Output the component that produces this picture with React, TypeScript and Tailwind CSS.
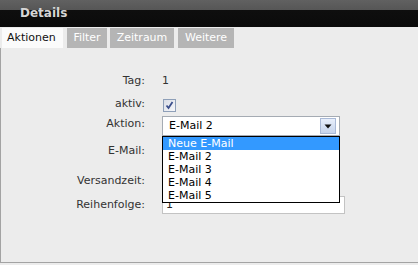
import React from "react";

function Checkbox() {
  return (
    <div className="ml-[1px] w-[13px] h-[13px] border border-[#8e9fb8] bg-[linear-gradient(135deg,#d9dde6,#f6f7fa)] flex items-center justify-center">
      <svg width="11" height="11" viewBox="0 0 11 11">
        <path d="M2.5 5.5 L4.5 8 L8.5 2" fill="none" stroke="#3c4f8c" strokeWidth="1.8" />
      </svg>
    </div>
  );
}

export default function App() {
  const items = ["Neue E-Mail", "E-Mail 2", "E-Mail 3", "E-Mail 4", "E-Mail 5"];
  return (
    <div className="w-[418px] h-[265px] bg-[#ececec] font-['DejaVu_Sans',sans-serif] text-[11px] overflow-hidden">
      <div className="h-[27px] bg-[linear-gradient(to_bottom,#616161_0px,#565656_10px,#0e0e0e_10px,#0b0b0b_27px)] pl-[20px] pt-[6px]">
        <span className="text-[12px] leading-[14px] font-bold text-[#d6d6d6]">Details</span>
      </div>
      <div className="mt-[1px] h-[20px] flex pl-[2px] bg-[#ececec]">
        <div className="w-[61px] h-[20px] bg-[#fbfbfb] text-[#111] leading-[20px] pl-[5px]">Aktionen</div>
        <div className="ml-[4px] w-[40px] h-[20px] bg-[#b5b5b5] text-white leading-[20px] text-center">Filter</div>
        <div className="ml-[3px] w-[64px] h-[20px] bg-[#b5b5b5] text-white leading-[20px] text-center">Zeitraum</div>
        <div className="ml-[4px] w-[56px] h-[20px] bg-[#b5b5b5] text-white leading-[20px] text-center">Weitere</div>
      </div>
      <div className="h-[215px] border-l border-b border-[#a3a3a3] pt-[22px] text-[#333]">
        <div className="flex items-center h-[22px]">
          <div className="w-[144px] text-right">Tag:</div>
          <div className="ml-[17px]">1</div>
        </div>
        <div className="flex items-center h-[24px]">
          <div className="w-[144px] text-right">aktiv:</div>
          <div className="ml-[17px] pt-[2px]"><Checkbox /></div>
        </div>
        <div className="flex items-center h-[20px]">
          <div className="w-[144px] text-right pb-[3px]">Aktion:</div>
          <div className="ml-[17px] relative w-[178px] h-[20px]">
            <div className="w-full h-full border border-[#a5abb3] bg-white flex items-center justify-between pl-[6px] pr-[3px] text-black">
              <span>E-Mail 2</span>
              <div className="w-[16px] h-[16px] border border-[#a9b9d6] bg-[linear-gradient(to_bottom,#e8effb,#c6d4ec)] flex items-center justify-center">
                <svg width="8" height="5" viewBox="0 0 8 5">
                  <path d="M0.5 0.5 L7.5 0.5 L4 4.5 Z" fill="#111" />
                </svg>
              </div>
            </div>
            <div className="absolute left-0 top-full w-[178px] border border-black bg-white z-10">
              {items.map((it, i) => (
                <div
                  key={it}
                  className={
                    i === 0
                      ? "h-[13px] leading-[13px] pl-[5px] bg-[#3399ff] text-white"
                      : "h-[13px] leading-[13px] pl-[5px] text-black"
                  }
                >
                  {it}
                </div>
              ))}
            </div>
          </div>
        </div>
        <div className="flex items-center h-[30px]">
          <div className="w-[144px] text-right">E-Mail:</div>
        </div>
        <div className="flex items-center h-[30px]">
          <div className="w-[144px] text-right">Versandzeit:</div>
        </div>
        <div className="flex items-center h-[18px]">
          <div className="w-[144px] text-right">Reihenfolge:</div>
          <div className="ml-[17px] w-[183px] h-[18px] border border-[#c3c3c3] bg-white pl-[3px] leading-[16px] text-[#222]">1</div>
        </div>
      </div>
    </div>
  );
}
